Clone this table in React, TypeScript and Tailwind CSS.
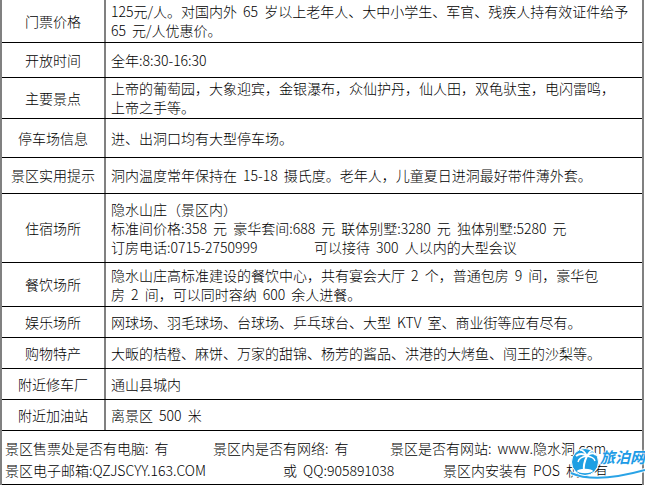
import React from "react";

type RowProps = { h: string; label: string; children: React.ReactNode };

function Row({ h, label, children }: RowProps) {
  return (
    <div className={`flex ${h} border-b border-black`}>
      <div className="w-[104px] shrink-0 border-r-2 border-[#808080] flex items-center justify-center">
        {label}
      </div>
      <div className="flex-1 pl-[5px] flex flex-col justify-center leading-[19px] whitespace-nowrap">
        {children}
      </div>
    </div>
  );
}

export default function App() {
  return (
    <div className="relative w-[645px] h-[486px] bg-white overflow-hidden text-[14px] font-light text-black [word-spacing:3px] font-['Noto_Sans_CJK_SC',sans-serif]">
      <div className="w-[644px] border-l-2 border-r-2 border-[#808080]">
        <Row h="h-[43px]" label="门票价格">
          <div>125元/人。对国内外 65 岁以上老年人、大中小学生、军官、残疾人持有效证件给予</div>
          <div>65 元/人优惠价。</div>
        </Row>
        <Row h="h-[35px]" label="开放时间">
          <div>全年:8:30-16:30</div>
        </Row>
        <Row h="h-[41px]" label="主要景点">
          <div>上帝的葡萄园，大象迎宾，金银瀑布，众仙护丹，仙人田，双龟驮宝，电闪雷鸣，</div>
          <div>上帝之手等。</div>
        </Row>
        <Row h="h-[39px]" label="停车场信息">
          <div>进、出洞口均有大型停车场。</div>
        </Row>
        <Row h="h-[36px]" label="景区实用提示">
          <div>洞内温度常年保持在 15-18 摄氏度。老年人，儿童夏日进洞最好带件薄外套。</div>
        </Row>
        <Row h="h-[69px]" label="住宿场所">
          <div>隐水山庄（景区内）</div>
          <div>标准间价格:358 元 豪华套间:688 元 联体别墅:3280 元 独体别墅:5280 元</div>
          <div className="flex">
            <span className="w-[203px]">订房电话:0715-2750999</span>
            <span>可以接待 300 人以内的大型会议</span>
          </div>
        </Row>
        <Row h="h-[44px]" label="餐饮场所">
          <div>隐水山庄高标准建设的餐饮中心，共有宴会大厅 2 个，普通包房 9 间，豪华包</div>
          <div>房 2 间，可以同时容纳 600 余人进餐。</div>
        </Row>
        <Row h="h-[31px]" label="娱乐场所">
          <div>网球场、羽毛球场、台球场、乒乓球台、大型 KTV 室、商业街等应有尽有。</div>
        </Row>
        <Row h="h-[31px]" label="购物特产">
          <div>大畈的桔橙、麻饼、万家的甜锦、杨芳的酱品、洪港的大烤鱼、闯王的沙梨等。</div>
        </Row>
        <Row h="h-[31px]" label="附近修车厂">
          <div>通山县城内</div>
        </Row>
        <Row h="h-[31px]" label="附近加油站">
          <div>离景区 500 米</div>
        </Row>
        <div className="h-[54px] border-b border-black pl-[3px] pt-[6px] leading-[22px] whitespace-nowrap">
          <div className="flex">
            <span className="w-[208px]">景区售票处是否有电脑: 有</span>
            <span className="w-[177px]">景区内是否有网络: 有</span>
            <span>景区是否有网站: www.隐水洞.com</span>
          </div>
          <div className="flex">
            <span className="w-[278px]">景区电子邮箱:QZJSCYY.163.COM</span>
            <span className="w-[160px]">或 QQ:905891038</span>
            <span>景区内安装有 POS 机：有</span>
          </div>
        </div>
      </div>

      {/* watermark logo */}
      <svg
        className="absolute left-[565px] top-[440px]"
        width="80"
        height="46"
        viewBox="0 0 80 46"
      >
        <path d="M6 33 Q30 44 80 30" stroke="#ffffff" strokeWidth="4" fill="none" />
        <path d="M6 33 Q30 44 80 30" stroke="#2aa3e6" strokeWidth="2" fill="none" />
        <circle cx="20" cy="22" r="13.5" fill="#1e9fe3" stroke="#ffffff" strokeWidth="1" />
        <path d="M19 31 Q18 24 22 16" stroke="#ffffff" strokeWidth="2" fill="none" />
        <path d="M22 16 Q16 12 11 16" stroke="#ffffff" strokeWidth="2" fill="none" />
        <path d="M22 16 Q27 11 31 15" stroke="#ffffff" strokeWidth="2" fill="none" />
        <path d="M22 16 Q19 10 15 10" stroke="#ffffff" strokeWidth="1.6" fill="none" />
        <path d="M22 16 Q25 10 29 10" stroke="#ffffff" strokeWidth="1.6" fill="none" />
        <path d="M22 16 Q14 17 13 22" stroke="#ffffff" strokeWidth="1.4" fill="none" />
        <path d="M22 16 Q29 17 30 21" stroke="#ffffff" strokeWidth="1.4" fill="none" />
        <ellipse cx="20" cy="31" rx="8" ry="2.2" fill="#ffffff" />
      </svg>
      <div className="absolute left-[600px] top-[449px] text-[15px] leading-[16px] font-bold italic [word-spacing:0px] text-[#1d9be6] [text-shadow:0_0_2px_#fff,0_0_2px_#fff]">
        旅泊网
      </div>
    </div>
  );
}
